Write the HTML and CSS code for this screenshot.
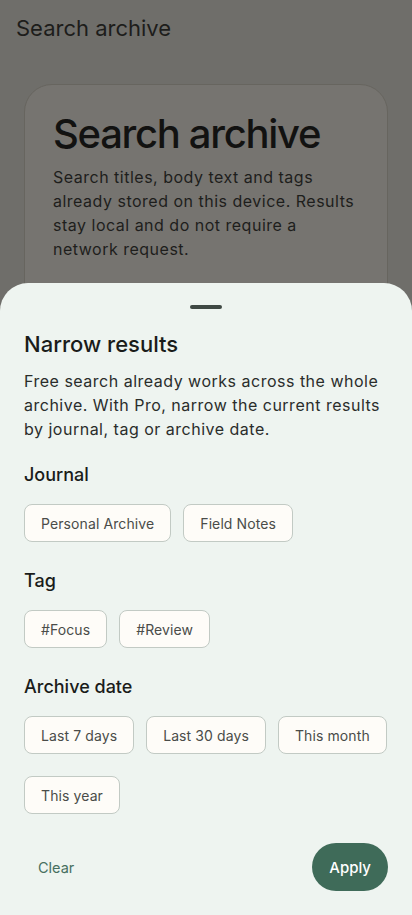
FILE: index.html
```html
<!DOCTYPE html>
<html lang="en">
<head>
<meta charset="utf-8">
<meta name="viewport" content="width=device-width, initial-scale=1">
<title>Search archive</title>
<link rel="stylesheet" href="styles.css">
</head>
<body>
<div class="screen">
  <header class="topbar">Search archive</header>
  <section class="card">
    <h1 class="card-title">Search archive</h1>
    <p class="card-text">Search titles, body text and tags already stored on this device. Results stay local and do not require a network request.</p>
  </section>

  <div class="sheet">
    <div class="handle"></div>
    <h2 class="sheet-title">Narrow results</h2>
    <p class="sheet-text">Free search already works across the whole archive. With Pro, narrow the current results by journal, tag or archive date.</p>

    <div class="group">
      <h3 class="group-title">Journal</h3>
      <div class="chips">
        <button class="chip">Personal Archive</button>
        <button class="chip">Field Notes</button>
      </div>
    </div>

    <div class="group">
      <h3 class="group-title">Tag</h3>
      <div class="chips">
        <button class="chip">#Focus</button>
        <button class="chip">#Review</button>
      </div>
    </div>

    <div class="group">
      <h3 class="group-title">Archive date</h3>
      <div class="chips">
        <button class="chip">Last 7 days</button>
        <button class="chip">Last 30 days</button>
        <button class="chip">This month</button>
        <button class="chip">This year</button>
      </div>
    </div>

    <div class="actions">
      <button class="btn-text">Clear</button>
      <button class="btn-filled">Apply</button>
    </div>
  </div>
</div>
</body>
</html>
```

FILE: styles.css
```css
* { box-sizing: border-box; }
html, body { margin: 0; padding: 0; }
body {
  font-family: Inter, "Noto Sans", sans-serif;
  background: #6f6e6a;
  width: 412px;
  height: 915px;
  overflow: hidden;
}
.screen {
  position: relative;
  width: 412px;
  height: 915px;
  background: #6f6e6a;
}
.topbar {
  padding: 14px 16px 0;
  height: 84px;
  font-size: 22px;
  line-height: 28px;
  color: #1d1d1b;
}
.card {
  margin: 0 24px;
  height: 260px;
  border: 1px solid #67655f;
  border-radius: 28px;
  background: #767470;
  padding: 25px 28px;
}
.card-title {
  margin: 0;
  font-size: 40px;
  line-height: 48px;
  font-weight: 500;
  color: #121211;
  letter-spacing: -1.3px;
}
.card-text {
  margin: 7px 0 0;
  font-size: 16px;
  line-height: 24px;
  letter-spacing: 0.5px;
  color: #1e1e1c;
}
.sheet {
  position: absolute;
  left: 0;
  right: 0;
  top: 283px;
  bottom: 0;
  background: #eef4f0;
  border-radius: 28px 28px 0 0;
  padding: 22px 24px 0;
  display: flex;
  flex-direction: column;
}
.handle {
  align-self: center;
  width: 32px;
  height: 4px;
  border-radius: 2px;
  background: #3f4944;
}
.sheet-title {
  margin: 21px 0 0;
  font-size: 22px;
  line-height: 28px;
  font-weight: 500;
  color: #1a1c1a;
}
.sheet-text {
  margin: 11px 0 0;
  font-size: 16px;
  line-height: 24px;
  letter-spacing: 0.5px;
  color: #2a2d2b;
}
.group { margin-top: 22px; }
.group-title {
  margin: 0;
  font-size: 18px;
  line-height: 24px;
  font-weight: 500;
  color: #1a1c1a;
}
.chips {
  margin-top: 12px;
  display: flex;
  flex-wrap: wrap;
  column-gap: 12px;
  row-gap: 12px;
}
.chip {
  margin: 5px 0;
  height: 38px;
  padding: 0 16px;
  border: 1px solid #c2cac4;
  border-radius: 8px;
  background: #fefcf8;
  font-family: Inter, "Noto Sans", sans-serif;
  font-size: 14px;
  letter-spacing: 0.1px;
  color: #4a4c49;
}
.actions {
  margin-top: 24px;
  display: flex;
  justify-content: space-between;
  align-items: center;
}
.btn-text {
  height: 48px;
  padding: 0 14px;
  border: none;
  background: none;
  font-family: Inter, "Noto Sans", sans-serif;
  font-size: 14.5px;
  letter-spacing: 0;
  color: #47705f;
}
.btn-filled {
  height: 48px;
  padding: 0 17px;
  border: none;
  border-radius: 24px;
  background: #3f6b59;
  font-family: Inter, "Noto Sans", sans-serif;
  font-size: 15px;
  font-weight: 500;
  letter-spacing: 0;
  color: #ffffff;
}
```
